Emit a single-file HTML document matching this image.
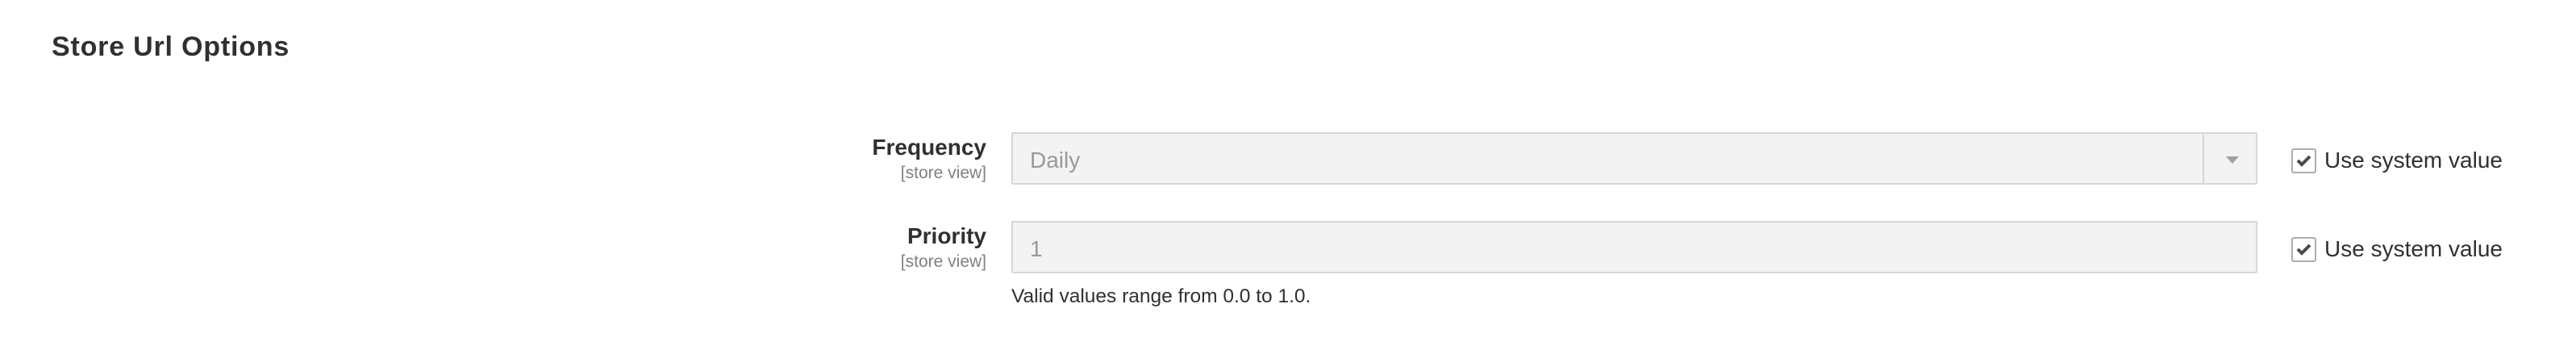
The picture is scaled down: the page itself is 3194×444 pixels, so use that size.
<!DOCTYPE html>
<html><head><meta charset="utf-8"><style>
*{margin:0;padding:0;box-sizing:border-box}
body{width:3194px;height:444px;background:#fff;position:relative;font-family:"Liberation Sans",sans-serif;color:#303030;overflow:hidden}
.a{position:absolute;white-space:nowrap}
.title{left:64px;top:39px;font-size:34px;font-weight:bold;color:#303030;letter-spacing:0.8px}
.lbl{font-size:28px;font-weight:bold;text-align:right;right:1971px}
.sv{font-size:21px;color:#808080;text-align:right;right:1971px}
.box{position:absolute;left:1254px;width:1545px;height:65px;background:#f3f3f3;border:2px solid #d6d6d6;border-radius:2px}
.val{position:absolute;left:21px;top:17px;font-size:28px;color:#999}
.cb{position:absolute;left:2841px;width:31px;height:31px;border:2px solid #adadad;border-radius:3px;background:#fff}
.ut{left:2882px;font-size:28px;color:#303030}
</style></head><body>
<div class="a title">Store Url Options</div>

<div class="a lbl" style="top:167px">Frequency</div>
<div class="a sv" style="top:203px">[store view]</div>
<div class="box" style="top:164px"><div class="val">Daily</div>
<div style="position:absolute;left:1475px;top:0;width:2px;height:61px;background:#d6d6d6"></div>
<div style="position:absolute;left:1504px;top:28px;width:0;height:0;border-left:8px solid transparent;border-right:8px solid transparent;border-top:9px solid #a39f9b"></div>
</div>
<div class="cb" style="top:184px"><svg width="27" height="27" viewBox="0 0 27 27"><path d="M6 13 L11 18 L21 8" stroke="#514943" stroke-width="4" fill="none"/></svg></div>
<div class="a ut" style="top:183px">Use system value</div>

<div class="a lbl" style="top:277px">Priority</div>
<div class="a sv" style="top:313px">[store view]</div>
<div class="box" style="top:274px"><div class="val">1</div></div>
<div class="cb" style="top:294px"><svg width="27" height="27" viewBox="0 0 27 27"><path d="M6 13 L11 18 L21 8" stroke="#514943" stroke-width="4" fill="none"/></svg></div>
<div class="a ut" style="top:293px">Use system value</div>

<div class="a" style="left:1254px;top:354px;font-size:24.5px;color:#303030">Valid values range from 0.0 to 1.0.</div>
</body></html>
